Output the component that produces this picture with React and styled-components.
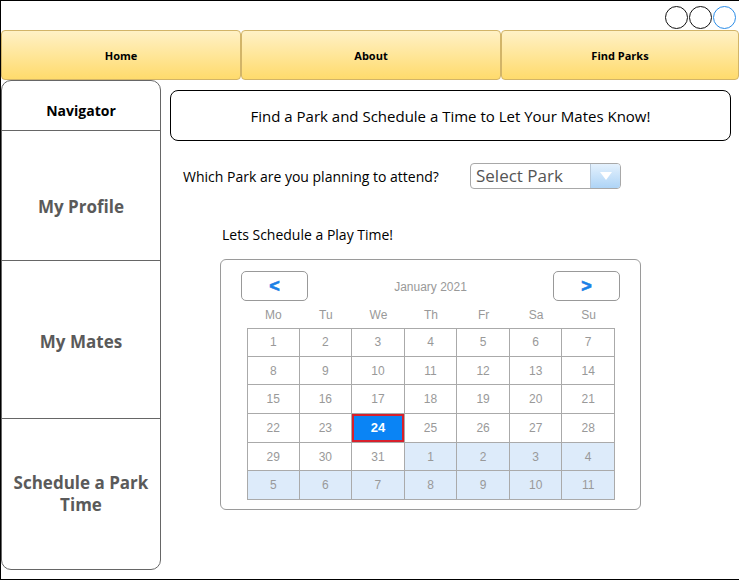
import React from "react";
import styled, { createGlobalStyle } from "styled-components";

const Global = createGlobalStyle`
  html, body { margin: 0; padding: 0; background: #fff; }
  * { box-sizing: border-box; }
`;

const hand = `"Comic Sans MS", "Open Sans", "DejaVu Sans", sans-serif`;
const arial = `"Liberation Sans", Arial, sans-serif`;

const Frame = styled.div`
  width: 739px;
  height: 580px;
  border-top: 1px solid #000;
  border-left: 1px solid #000;
  border-bottom: 1px solid #000;
  display: flex;
  flex-direction: column;
  overflow: hidden;
  font-family: ${hand};
`;

const TopBar = styled.div`
  height: 29px;
  display: flex;
  justify-content: flex-end;
  align-items: center;
  padding-right: 3px;
  padding-top: 3px;
`;

const WinDot = styled.span`
  width: 23px;
  height: 23px;
  border-radius: 50%;
  border: 1.3px solid ${(p) => (p.$blue ? "#2a8ce8" : "#111")};
  margin-left: 1px;
`;

const NavBar = styled.nav`
  height: 50px;
  display: grid;
  grid-template-columns: 240px 260px 1fr;
`;

const Tab = styled.div`
  display: flex;
  align-items: center;
  justify-content: center;
  background: linear-gradient(#fff1c6, #ffdb6c);
  border: 1px solid #d2b468;
  border-radius: 4px;
  font-size: 11px;
  font-weight: bold;
  color: #000;
`;

const Body = styled.div`
  flex: 1;
  display: flex;
  align-items: flex-start;
`;

const Sidebar = styled.aside`
  width: 160px;
  height: 490px;
  border: 1px solid #666;
  border-radius: 10px;
  display: flex;
  flex-direction: column;
  overflow: hidden;
`;

const SideItem = styled.div`
  height: ${(p) => p.$h}px;
  flex-shrink: 0;
  display: flex;
  align-items: center;
  justify-content: center;
  text-align: center;
  padding: ${(p) => p.$shift || 0}px 8px 0;
  line-height: 22px;
  border-bottom: ${(p) => (p.$last ? "none" : "1px solid #666")};
  font-weight: bold;
  font-size: ${(p) => (p.$small ? "14px" : "17px")};
  color: ${(p) => (p.$small ? "#000" : "#5a5a5a")};
  flex: ${(p) => (p.$last ? 1 : "none")};
`;

const Main = styled.main`
  flex: 1;
  padding: 10px 8px 0 9px;
  display: flex;
  flex-direction: column;
`;

const TitleBox = styled.div`
  height: 51px;
  border: 1px solid #000;
  border-radius: 8px;
  display: flex;
  align-items: center;
  justify-content: center;
  font-size: 15px;
  color: #000;
`;

const QuestionRow = styled.div`
  margin-top: 22px;
  padding-left: 13px;
  display: flex;
  align-items: center;
  height: 26px;
`;

const Question = styled.span`
  width: 287px;
  font-size: 14px;
  color: #000;
`;

const Select = styled.div`
  width: 151px;
  height: 26px;
  border: 1px solid #a8a8a8;
  border-radius: 4px;
  display: flex;
  overflow: hidden;
`;

const SelectText = styled.span`
  flex: 1;
  padding-left: 5px;
  font-size: 17px;
  line-height: 24px;
  color: #555;
`;

const SelectBtn = styled.span`
  width: 30px;
  border-left: 1px solid #b8c8d8;
  background: linear-gradient(#e4f1fd, #aed4f6);
  display: flex;
  align-items: center;
  justify-content: center;
`;

const PlayLabel = styled.div`
  margin-top: 36px;
  padding-left: 52px;
  font-size: 14px;
  color: #000;
  line-height: 20px;
`;

const Calendar = styled.div`
  margin-top: 14px;
  margin-left: 50px;
  width: 421px;
  height: 251px;
  border: 1px solid #9a9a9a;
  border-radius: 6px;
  padding: 11px 20px 0 20px;
  font-family: ${arial};
  color: #999;
`;

const CalHead = styled.div`
  display: flex;
  align-items: center;
  justify-content: space-between;
  height: 30px;
`;

const NavBtn = styled.div`
  width: 67px;
  height: 30px;
  border: 1px solid #999;
  border-radius: 5px;
  display: flex;
  align-items: center;
  justify-content: center;
  color: #1a80e6;
  font-weight: 900;
  font-size: 18px;
  -webkit-text-stroke: 0.6px #1a80e6;
`;

const Month = styled.span`
  font-size: 12px;
  color: #999;
  padding-top: 1px;
`;

const Grid = styled.div`
  margin-left: 6px;
  width: 368px;
  display: grid;
  grid-template-columns: repeat(7, 1fr);
`;

const DayName = styled.div`
  height: 27px;
  display: flex;
  align-items: center;
  justify-content: center;
  font-size: 12px;
  color: #999;
`;

const Cell = styled.div`
  height: 28.7px;
  display: flex;
  align-items: center;
  justify-content: center;
  border-right: 1px solid #aaa;
  border-bottom: 1px solid #aaa;
  border-left: ${(p) => (p.$col === 0 ? "1px solid #aaa" : "none")};
  border-top: ${(p) => (p.$row === 0 ? "1px solid #aaa" : "none")};
  background: ${(p) => (p.$sel ? "#0a84f5" : p.$next ? "#ddebfa" : "#fff")};
  color: ${(p) => (p.$sel ? "#fff" : "#999")};
  font-weight: ${(p) => (p.$sel ? "bold" : "normal")};
  font-size: ${(p) => (p.$sel ? "13px" : "12px")};
  box-shadow: ${(p) => (p.$sel ? "inset 0 0 0 2px #d8202c" : "none")};
`;

const days = ["Mo", "Tu", "We", "Th", "Fr", "Sa", "Su"];

const cells = [];
for (let i = 0; i < 42; i++) {
  const n = i + 1;
  const next = n > 31;
  cells.push({ label: next ? n - 31 : n, next, sel: n === 24 });
}

export default function App() {
  return (
    <>
      <Global />
      <Frame>
        <TopBar>
          <WinDot />
          <WinDot />
          <WinDot $blue />
        </TopBar>
        <NavBar>
          <Tab>Home</Tab>
          <Tab>About</Tab>
          <Tab>Find Parks</Tab>
        </NavBar>
        <Body>
          <Sidebar>
            <SideItem $h={50} $small $shift={11}>Navigator</SideItem>
            <SideItem $h={130} $shift={22}>My Profile</SideItem>
            <SideItem $h={158} $shift={4}>My Mates</SideItem>
            <SideItem $h={150} $last>Schedule a Park Time</SideItem>
          </Sidebar>
          <Main>
            <TitleBox>Find a Park and Schedule a Time to Let Your Mates Know!</TitleBox>
            <QuestionRow>
              <Question>Which Park are you planning to attend?</Question>
              <Select>
                <SelectText>Select Park</SelectText>
                <SelectBtn>
                  <svg width="14" height="10" viewBox="0 0 14 10">
                    <path d="M1 1 L13 1 L7 9 Z" fill="#fff" />
                  </svg>
                </SelectBtn>
              </Select>
            </QuestionRow>
            <PlayLabel>Lets Schedule a Play Time!</PlayLabel>
            <Calendar>
              <CalHead>
                <NavBtn>&lt;</NavBtn>
                <Month>January 2021</Month>
                <NavBtn>&gt;</NavBtn>
              </CalHead>
              <Grid>
                {days.map((d) => (
                  <DayName key={d}>{d}</DayName>
                ))}
                {cells.map((c, i) => (
                  <Cell
                    key={i}
                    $col={i % 7}
                    $row={Math.floor(i / 7)}
                    $next={c.next}
                    $sel={c.sel}
                  >
                    {c.label}
                  </Cell>
                ))}
              </Grid>
            </Calendar>
          </Main>
        </Body>
      </Frame>
    </>
  );
}
